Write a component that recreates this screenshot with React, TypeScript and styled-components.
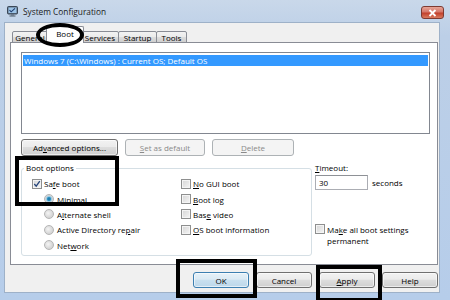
import React from 'react';
import styled, { createGlobalStyle } from 'styled-components';

const GlobalStyle = createGlobalStyle`
  html, body {
    margin: 0;
    padding: 0;
  }
  body {
    font-family: 'Open Sans', 'Liberation Sans', sans-serif;
    font-size: 8px;
    color: #000;
  }
`;

const Window = styled.div`
  position: relative;
  width: 450px;
  height: 300px;
  overflow: hidden;
  background: linear-gradient(180deg, #c9d8ea 0%, #bccfe7 12%, #b6cdea 100%);

  display: flex;
  flex-direction: column;
`;

const TitleBar = styled.div`
  height: 22px;
  flex-shrink: 0;
  display: flex;
  align-items: center;
  gap: 5px;
  padding-left: 7px;
`;

const TitleText = styled.span`
  font-size: 8.3px;
  color: #1b1b1b;
`;

const CloseButton = styled.div`
  margin-left: auto;
  margin-right: 6px;
  margin-top: 3px;
  width: 23px;
  height: 13px;
  box-sizing: border-box;
  border: 1px solid #7d3a32;
  border-radius: 3px;
  background: linear-gradient(180deg, #e7a497 0%, #d5776a 45%, #c2402c 55%, #d97a5f 100%);

  display: flex;
  justify-content: center;
  align-items: center;
`;

const Body = styled.div`
  flex: 1;
  margin: 0 10px 7px 4px;
  border: 1px solid #9eb1c8;
  background: #f0f0f0;
  padding: 0 1px 0 5px;

  display: flex;
  flex-direction: column;
`;

const TabStrip = styled.div`
  height: 17px;
  margin-top: 3px;
  margin-bottom: -1px;
  padding-left: 2px;
  position: relative;
  z-index: 1;

  display: flex;
  align-items: flex-end;
`;

const Tab = styled.div<{ $w: number; $active?: boolean }>`
  width: ${(p) => p.$w}px;
  height: ${(p) => (p.$active ? 17 : 12)}px;
  margin-left: ${(p) => (p.$active ? -2 : -1)}px;
  margin-right: ${(p) => (p.$active ? -2 : 0)}px;
  box-sizing: border-box;
  border: 1px solid #898c95;
  border-bottom: ${(p) => (p.$active ? 'none' : '1px solid #898c95')};
  border-radius: 2px 2px 0 0;
  background: ${(p) =>
    p.$active ? '#ffffff' : 'linear-gradient(180deg, #f2f2f2 0%, #ebebeb 50%, #dddddd 51%, #cfcfcf 100%)'};
  position: relative;
  z-index: ${(p) => (p.$active ? 2 : 1)};

  display: flex;
  justify-content: center;
  align-items: center;
  padding-bottom: ${(p) => (p.$active ? 3 : 0)}px;
  white-space: nowrap;
  overflow: hidden;

  &:first-child {
    margin-left: 0;
  }
`;

const Panel = styled.div`
  height: 223px;
  box-sizing: border-box;
  border: 1px solid #898c95;
  background: #ffffff;
  padding: 9px 7px 8px 10px;

  display: flex;
  flex-direction: column;
`;

const ListBox = styled.div`
  height: 82px;
  box-sizing: border-box;
  border: 1px solid #828790;
  background: #ffffff;
  padding: 2px 1px;
`;

const ListRow = styled.div<{ $selected?: boolean }>`
  height: 11px;
  line-height: 11px;
  padding-left: 1px;
  background: ${(p) => (p.$selected ? '#3399ff' : 'transparent')};
  color: ${(p) => (p.$selected ? '#ffffff' : '#000000')};
  white-space: nowrap;
`;

const ButtonRow = styled.div`
  margin-top: 5px;
  display: flex;
  gap: 7px;
`;

const Button = styled.div<{ $w: number; $h?: number; $disabled?: boolean; $default?: boolean }>`
  width: ${(p) => p.$w}px;
  height: ${(p) => p.$h ?? 17}px;
  box-sizing: border-box;
  border: 1px solid ${(p) => (p.$disabled ? '#adb2b5' : p.$default ? '#3c7fb1' : '#707070')};
  border-radius: 3px;
  background: ${(p) =>
    p.$disabled
      ? '#f4f4f4'
      : p.$default
        ? 'linear-gradient(180deg, #e6f1f8 0%, #dbeaf4 45%, #c9e0ef 50%, #bcd7ea 100%)'
        : 'linear-gradient(180deg, #f2f2f2 0%, #ebebeb 45%, #dddddd 50%, #cfcfcf 100%)'};
  color: ${(p) => (p.$disabled ? '#8a8a8a' : '#000000')};
  box-shadow: inset 0 0 0 1px ${(p) => (p.$disabled ? 'transparent' : 'rgba(255,255,255,0.6)')};

  display: flex;
  justify-content: center;
  align-items: center;
  white-space: nowrap;
`;

const Lower = styled.div`
  margin-top: 6px;
  display: grid;
  grid-template-columns: 291px 1fr;
  column-gap: 3px;
`;

const GroupBox = styled.fieldset`
  margin: 0;
  padding: 0;
  min-width: 0;
  border: 1px solid #d5dfe5;
  border-radius: 3px;
`;

const Legend = styled.legend`
  margin-left: 2px;
  padding: 0 2px;
  line-height: 12px;
`;

const GroupColumns = styled.div`
  padding: 2px 0 2px 10px;
  display: grid;
  grid-template-columns: 149px 1fr;
`;

const Column = styled.div`
  display: flex;
  flex-direction: column;
`;

const OptionRow = styled.div<{ $indent?: number }>`
  height: 15.4px;
  padding-left: ${(p) => p.$indent ?? 0}px;
  display: flex;
  align-items: center;
  gap: 2px;
  white-space: nowrap;
`;

const Box = styled.span`
  width: 10px;
  height: 10px;
  flex-shrink: 0;
  box-sizing: border-box;
  border: 1px solid #8e8f8f;
  background: linear-gradient(135deg, #d5d5d5 0%, #e8e8e8 60%, #f6f6f6 100%);
  box-shadow: inset 0 0 0 1px #f4f4f4;
  position: relative;
`;

const Radio = styled.span<{ $checked?: boolean }>`
  width: 10px;
  height: 10px;
  flex-shrink: 0;
  margin-right: 1px;
  box-sizing: border-box;
  border-radius: 50%;
  border: 1px solid #b5b5b5;
  background: ${(p) =>
    p.$checked
      ? 'radial-gradient(circle at 50% 50%, #1a6c9c 0%, #2f96c7 30%, #9fc9df 45%, #dcdcdc 70%)'
      : 'radial-gradient(circle at 40% 40%, #f4f4f4 0%, #dadada 55%, #c9c9c9 100%)'};
`;

const Label = styled.span`
  white-space: nowrap;
`;

const U = styled.span`
  text-decoration: underline;
`;

const SideColumn = styled.div`
  display: flex;
  flex-direction: column;
`;

const FieldLabel = styled.div`
  line-height: 12px;
`;

const InputRow = styled.div`
  margin-top: 1px;
  display: flex;
  align-items: center;
  gap: 4px;
`;

const TextInput = styled.div`
  width: 53px;
  height: 15px;
  box-sizing: border-box;
  border: 1px solid #abadb3;
  border-top-color: #8e9196;
  background: #ffffff;
  padding-left: 3px;
  line-height: 13px;
`;

const PermanentRow = styled.div`
  margin-top: 34px;
  display: flex;
  align-items: flex-start;
  gap: 2px;
  line-height: 11px;
`;

const Footer = styled.div`
  padding-top: 7px;
  display: flex;
  justify-content: flex-end;
  gap: 7px;
`;

const Ring = styled.div<{ $x: number; $y: number; $w: number; $h: number; $round?: boolean; $t?: number }>`
  position: absolute;
  left: ${(p) => p.$x}px;
  top: ${(p) => p.$y}px;
  width: ${(p) => p.$w}px;
  height: ${(p) => p.$h}px;
  box-sizing: border-box;
  border: ${(p) => p.$t ?? 4}px solid #000;
  border-radius: ${(p) => (p.$round ? '50%' : '0')};
  pointer-events: none;
  z-index: 5;
`;

const AppIcon = () => (
  <svg width="11" height="11" viewBox="0 0 11 11">
    <rect x="0.5" y="0.5" width="10" height="7.5" rx="1" fill="#5a6c80" stroke="#3b4757" />
    <rect x="1.5" y="1.5" width="8" height="5.5" fill="#9cc3e6" />
    <path d="M2.5 4.2 L4.2 5.8 L8 2.3" stroke="#1f3c6e" strokeWidth="1.1" fill="none" />
    <rect x="4" y="8" width="3" height="1.5" fill="#6b7a8c" />
    <rect x="2.5" y="9.5" width="6" height="1" fill="#4b5866" />
  </svg>
);

const CheckMark = () => (
  <svg width="8" height="8" viewBox="0 0 8 8" style={{ position: 'absolute', left: 0, top: 0 }}>
    <path d="M1.3 4 L3.2 6.1 L6.8 1.2" stroke="#25447a" strokeWidth="1.3" fill="none" />
  </svg>
);

const CloseX = () => (
  <svg width="9" height="8" viewBox="0 0 9 8">
    <path d="M1.5 1 L7.5 7 M7.5 1 L1.5 7" stroke="#ffffff" strokeWidth="1.8" />
  </svg>
);

const App: React.FC = () => {
  return (
    <>
      <GlobalStyle />
      <Window>
        <TitleBar>
          <AppIcon />
          <TitleText>System Configuration</TitleText>
          <CloseButton>
            <CloseX />
          </CloseButton>
        </TitleBar>

        <Body>
          <TabStrip>
            <Tab $w={36}>General</Tab>
            <Tab $w={38} $active>
              Boot
            </Tab>
            <Tab $w={38}>Services</Tab>
            <Tab $w={39}>Startup</Tab>
            <Tab $w={31}>Tools</Tab>
          </TabStrip>

          <Panel>
            <ListBox>
              <ListRow $selected>Windows 7 (C:\Windows) : Current OS; Default OS</ListRow>
            </ListBox>

            <ButtonRow>
              <Button $w={97}>
                <Label>
                  Ad<U>v</U>anced options...
                </Label>
              </Button>
              <Button $w={80} $disabled>
                <Label>
                  <U>S</U>et as default
                </Label>
              </Button>
              <Button $w={82} $disabled>
                <Label>
                  <U>D</U>elete
                </Label>
              </Button>
            </ButtonRow>

            <Lower>
              <GroupBox>
                <Legend>Boot options</Legend>
                <GroupColumns>
                  <Column>
                    <OptionRow>
                      <Box>
                        <CheckMark />
                      </Box>
                      <Label>
                        Sa<U>f</U>e boot
                      </Label>
                    </OptionRow>
                    <OptionRow $indent={12}>
                      <Radio $checked />
                      <Label>
                        <U>M</U>inimal
                      </Label>
                    </OptionRow>
                    <OptionRow $indent={12}>
                      <Radio />
                      <Label>
                        A<U>l</U>ternate shell
                      </Label>
                    </OptionRow>
                    <OptionRow $indent={12}>
                      <Radio />
                      <Label>
                        Active Directory re<U>p</U>air
                      </Label>
                    </OptionRow>
                    <OptionRow $indent={12}>
                      <Radio />
                      <Label>
                        Net<U>w</U>ork
                      </Label>
                    </OptionRow>
                  </Column>
                  <Column>
                    <OptionRow>
                      <Box />
                      <Label>
                        <U>N</U>o GUI boot
                      </Label>
                    </OptionRow>
                    <OptionRow>
                      <Box />
                      <Label>
                        <U>B</U>oot log
                      </Label>
                    </OptionRow>
                    <OptionRow>
                      <Box />
                      <Label>
                        Bas<U>e</U> video
                      </Label>
                    </OptionRow>
                    <OptionRow>
                      <Box />
                      <Label>
                        <U>O</U>S boot information
                      </Label>
                    </OptionRow>
                  </Column>
                </GroupColumns>
              </GroupBox>

              <SideColumn>
                <FieldLabel>
                  <U>T</U>imeout:
                </FieldLabel>
                <InputRow>
                  <TextInput>30</TextInput>
                  <Label>seconds</Label>
                </InputRow>
                <PermanentRow>
                  <Box />
                  <span>
                    Ma<U>k</U>e all boot settings
                    <br />
                    permanent
                  </span>
                </PermanentRow>
              </SideColumn>
            </Lower>
          </Panel>

          <Footer>
            <Button $w={56} $h={16} $default>
              OK
            </Button>
            <Button $w={56} $h={16}>
              Cancel
            </Button>
            <Button $w={56} $h={16}>
              <Label>
                <U>A</U>pply
              </Label>
            </Button>
            <Button $w={56} $h={16}>
              Help
            </Button>
          </Footer>
        </Body>

        <Ring $x={36} $y={23} $w={48} $h={24} $round />
        <Ring $x={15} $y={156} $w={104} $h={50} />
        <Ring $x={176} $y={259} $w={81} $h={39} />
        <Ring $x={316} $y={265} $w={66} $h={37} />
      </Window>
    </>
  );
};

export default App;
